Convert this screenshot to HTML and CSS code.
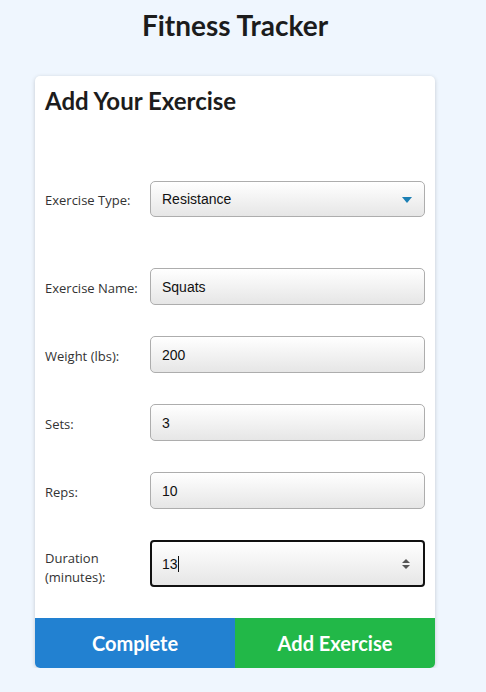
FILE: index.html
```html
<!DOCTYPE html>
<html>
<head>
<meta charset="utf-8">
<link rel="stylesheet" href="styles.css">
</head>
<body>
<div class="page">
  <h1 class="title">Fitness Tracker</h1>
  <div class="card">
    <h2 class="card-title">Add Your Exercise</h2>
    <form class="form">
      <div class="row row-type">
        <label class="label">Exercise Type:</label>
        <div class="field select-field">
          <span class="field-text">Resistance</span>
          <svg class="select-arrow" width="10" height="6" viewBox="0 0 10 6"><path d="M0 0 L10 0 L5 6 Z" fill="#1b7fb4"/></svg>
        </div>
      </div>
      <div class="row">
        <label class="label">Exercise Name:</label>
        <div class="field"><span class="field-text">Squats</span></div>
      </div>
      <div class="row">
        <label class="label">Weight (lbs):</label>
        <div class="field"><span class="field-text">200</span></div>
      </div>
      <div class="row">
        <label class="label">Sets:</label>
        <div class="field"><span class="field-text">3</span></div>
      </div>
      <div class="row">
        <label class="label">Reps:</label>
        <div class="field"><span class="field-text">10</span></div>
      </div>
      <div class="row">
        <label class="label label-tall">Duration<br>(minutes):</label>
        <div class="field field-focus">
          <span class="field-text">13<span class="caret"></span></span>
          <svg class="spinner" width="8" height="12" viewBox="0 0 8 12"><path d="M0 5 L8 5 L4 1 Z M0 7 L8 7 L4 11 Z" fill="#555"/></svg>
        </div>
      </div>
    </form>
    <div class="actions">
      <button class="btn btn-complete" type="button">Complete</button>
      <button class="btn btn-add" type="button">Add Exercise</button>
    </div>
  </div>
</div>
</body>
</html>
```
FILE: styles.css
```css
html, body {
  margin: 0;
  padding: 0;
  background: #eff6fe;
}
body {
  font-family: "Open Sans", sans-serif;
  color: #222;
}
.page {
  width: 470px;
  display: flex;
  flex-direction: column;
  align-items: center;
}
.title {
  font-family: Lato, sans-serif;
  font-weight: 700;
  font-size: 28px;
  line-height: 34px;
  margin: 8px 0 0 0;
  color: #1c1c1c;
}
.card {
  margin-top: 34px;
  width: 400px;
  background: #fff;
  border-radius: 5px;
  box-shadow: 0 1px 4px rgba(0,0,0,0.18);
  overflow: hidden;
}
.card-title {
  font-family: Lato, sans-serif;
  font-weight: 700;
  font-size: 24px;
  line-height: 30px;
  margin: 10px 10px 0 10px;
  color: #1c1c1c;
}
.form {
  padding: 65px 10px 31px 10px;
  display: flex;
  flex-direction: column;
  gap: 31px;
}
.row {
  display: grid;
  grid-template-columns: 105px 1fr;
  align-items: center;
}
.row-type {
  margin-bottom: 20px;
}
.label {
  font-size: 13px;
  line-height: 19px;
  color: #333;
  padding-top: 3px;
}
.label-tall {
  padding-top: 9px;
}
.field {
  position: relative;
  height: 35px;
  border: 1px solid #adadad;
  border-radius: 5px;
  background: linear-gradient(#ffffff, #e6e6e6);
  display: flex;
  align-items: center;
  padding: 0 11px;
  font-family: "Liberation Sans", Arial, sans-serif;
  font-size: 14px;
  color: #111;
}
.select-field {
  height: 34px;
}
.field-focus {
  height: 43px;
  border: 2px solid #111;
  border-radius: 4px;
  padding: 0 10px;
}
.field-text {
  display: flex;
  align-items: center;
}
.caret {
  display: inline-block;
  width: 1px;
  height: 16px;
  background: #111;
}
.select-arrow {
  position: absolute;
  right: 12px;
  top: 15px;
}
.spinner {
  position: absolute;
  right: 13px;
  top: 16px;
}
.actions {
  display: grid;
  grid-template-columns: 1fr 1fr;
}
.btn {
  height: 50px;
  border: none;
  margin: 0;
  font-family: Lato, sans-serif;
  font-weight: 700;
  font-size: 20px;
  color: #fff;
}
.btn-complete {
  background: #2281d1;
}
.btn-add {
  background: #22b848;
}
```
